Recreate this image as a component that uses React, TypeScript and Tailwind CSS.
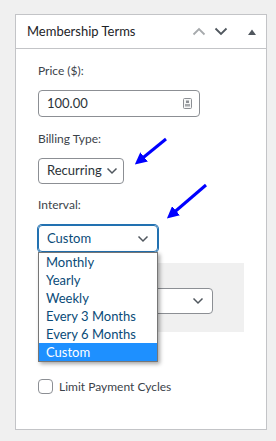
import React from "react";

const FONT = { fontFamily: 'Lato, "Noto Sans", sans-serif' };

const OPTIONS = ["Monthly", "Yearly", "Weekly", "Every 3 Months", "Every 6 Months", "Custom"];

function Chevron({ className = "" }: { className?: string }) {
  return (
    <svg width="12" height="8" viewBox="0 0 12 8" className={className} fill="none">
      <path d="M1.5 1.5 L6 6 L10.5 1.5" stroke="currentColor" strokeWidth="1.5" />
    </svg>
  );
}

function Arrows() {
  return (
    <svg className="pointer-events-none absolute left-0 top-0" width="276" height="441" viewBox="0 0 276 441">
      <defs>
        <marker id="head" markerWidth="4" markerHeight="4" refX="2.2" refY="2" orient="auto">
          <path d="M0 0 L4 2 L0 4 Z" fill="#0000ff" />
        </marker>
      </defs>
      <line x1="166" y1="139" x2="139" y2="161" stroke="#0000ff" strokeWidth="3" markerEnd="url(#head)" />
      <line x1="206" y1="185" x2="171" y2="215" stroke="#0000ff" strokeWidth="3" markerEnd="url(#head)" />
    </svg>
  );
}

export default function App() {
  return (
    <div className="relative min-h-[441px] bg-[#f0f0f0] pl-[15px] pt-[14px]" style={FONT}>
      <div className="w-[252px] border border-[#c3c4c7] bg-white">
        <div className="flex h-[34px] items-center border-b border-[#c3c4c7] pl-[11px] pr-[10px]">
          <span className="flex-1 text-[13px] text-[#1d2327]">Membership Terms</span>
          <svg width="14" height="9" viewBox="0 0 14 9" className="text-[#a7aaad]" fill="none">
            <path d="M1.5 7.5 L7 2 L12.5 7.5" stroke="currentColor" strokeWidth="1.8" />
          </svg>
          <svg width="14" height="9" viewBox="0 0 14 9" className="ml-[8px] text-[#50575e]" fill="none">
            <path d="M1.5 1.5 L7 7 L12.5 1.5" stroke="currentColor" strokeWidth="1.8" />
          </svg>
          <svg width="8" height="6" viewBox="0 0 8 6" className="ml-[20px] text-[#50575e]">
            <path d="M0 6 L4 0.5 L8 6 Z" fill="currentColor" />
          </svg>
        </div>

        <div className="px-[22px] pb-[35px] pt-[13px] text-[12px] text-[#3c434a]">
          <label className="block leading-[18px]">Price ($):</label>
          <div className="mt-[10px] flex h-[27px] w-[162px] items-center rounded-[4px] border border-[#8c8f94] pl-[8px] pr-[7px]">
            <span className="flex-1 text-[13px] text-[#2c3338]">100.00</span>
            <svg width="9" height="11" viewBox="0 0 9 11">
              <rect x="0.5" y="0.5" width="8" height="10" rx="1" fill="#f6f7f7" stroke="#8c8f94" />
              <rect x="3" y="2.5" width="3" height="2.5" fill="#8c8f94" />
              <rect x="2" y="6" width="5" height="2.5" fill="#a7aaad" />
            </svg>
          </div>

          <label className="mt-[13px] block leading-[18px]">Billing Type:</label>
          <div className="mt-[10px] flex h-[26px] w-[86px] items-center justify-between rounded-[4px] border border-[#8c8f94] pl-[8px] pr-[5px]">
            <span className="whitespace-nowrap text-[13px] text-[#2c3338]">Recurring</span>
            <Chevron className="shrink-0 text-[#50575e]" />
          </div>

          <label className="mt-[12px] block leading-[18px]">Interval:</label>
          <div className="relative z-10 mt-[11px] w-[120px]">
            <div className="flex h-[27px] items-center rounded-[4px] border border-[#2271b1] pl-[8px] pr-[8px] shadow-[0_0_0_1px_#2271b1]">
              <span className="flex-1 text-[13px] text-[#0a4b78]">Custom</span>
              <Chevron className="text-[#50575e]" />
            </div>
            <ul className="absolute left-0 top-full w-[120px] border border-[#767676] bg-white shadow-[2px_2px_4px_rgba(0,0,0,0.35)]">
              {OPTIONS.map((o) => (
                <li
                  key={o}
                  className={`h-[18px] pl-[7px] text-[13px] leading-[18px] ${
                    o === "Custom" ? "bg-[#1e90ff] text-white" : "text-[#0a4b78]"
                  }`}
                >
                  {o}
                </li>
              ))}
            </ul>
          </div>

          <div className="mt-[11px] h-[69px] w-[206px] bg-[#f0f0f0] pl-[10px] pt-[25px]">
            <div className="flex h-[26px] w-[165px] items-center justify-end rounded-[4px] border border-[#8c8f94] bg-white pr-[8px]">
              <Chevron className="text-[#50575e]" />
            </div>
          </div>

          <label className="mt-[47px] flex items-center">
            <span className="h-[15px] w-[15px] rounded-[4px] border border-[#8c8f94] bg-white" />
            <span className="ml-[6px] leading-[15px]">Limit Payment Cycles</span>
          </label>
        </div>
      </div>
      <Arrows />
    </div>
  );
}
